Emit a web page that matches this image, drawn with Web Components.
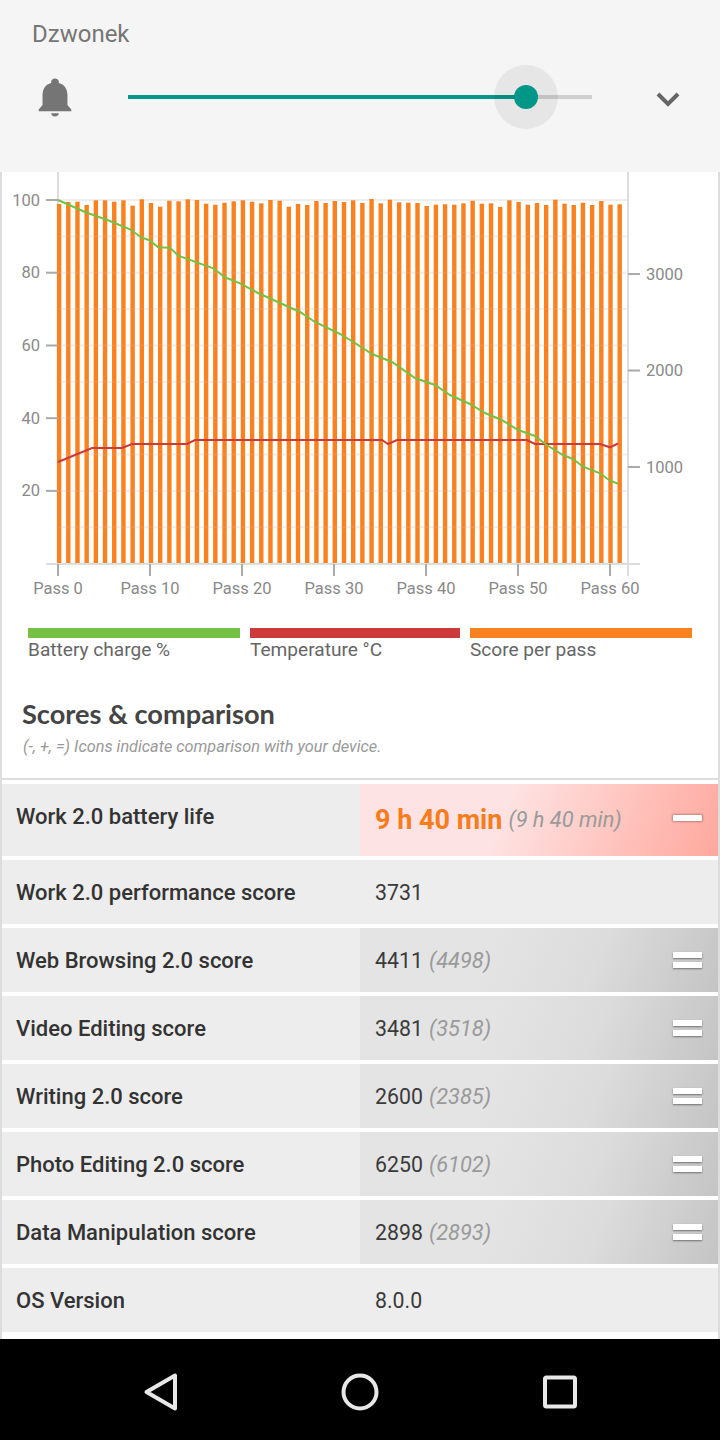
<!DOCTYPE html>
<html lang="pl">
<head>
<meta charset="utf-8">
<title>Work 2.0 battery</title>
<style>
html, body { margin: 0; padding: 0; background: #fff; }
body { width: 720px; height: 1440px; overflow: hidden; display: flex; flex-direction: column; font-family: Roboto, "Liberation Sans", sans-serif; }
</style>
</head>
<body>
<volume-panel label="Dzwonek"></volume-panel>
<result-page>
  <battery-chart></battery-chart>
  <chart-legend></chart-legend>
  <section-head title="Scores &amp; comparison" note="(-, +, =) Icons indicate comparison with your device."></section-head>
  <score-row label="Work 2.0 battery life" value="9 h 40 min" compare="(9 h 40 min)" icon="minus" main></score-row>
  <score-row label="Work 2.0 performance score" value="3731"></score-row>
  <score-row label="Web Browsing 2.0 score" value="4411" compare="(4498)" icon="equal"></score-row>
  <score-row label="Video Editing score" value="3481" compare="(3518)" icon="equal"></score-row>
  <score-row label="Writing 2.0 score" value="2600" compare="(2385)" icon="equal"></score-row>
  <score-row label="Photo Editing 2.0 score" value="6250" compare="(6102)" icon="equal"></score-row>
  <score-row label="Data Manipulation score" value="2898" compare="(2893)" icon="equal"></score-row>
  <score-row label="OS Version" value="8.0.0"></score-row>
</result-page>
<nav-bar></nav-bar>

<script>
const panelTemplate = document.createElement('template')
panelTemplate.innerHTML = `
<style>
:host { display: block; height: 172px; background: #f5f5f5; flex: none; box-sizing: border-box; padding: 20px 0 0 32px; }
.label { font: 400 24px/28px Roboto, sans-serif; color: #757575; height: 28px; }
.line { display: flex; align-items: center; margin-top: 17px; height: 64px; }
.bell { width: 46px; height: 46px; flex: none; }
.track { position: relative; width: 464px; height: 4px; margin-left: 50px; background: linear-gradient(to right, #009688 398px, #cfcfcf 398px); flex: none; }
.halo { position: absolute; left: 366px; top: -30px; width: 64px; height: 64px; border-radius: 50%; background: rgba(0, 0, 0, .06); }
.thumb { position: absolute; left: 386px; top: -10px; width: 24px; height: 24px; border-radius: 50%; background: #009688; }
.more { width: 36px; height: 36px; margin-left: 58px; margin-top: 4px; flex: none; }
</style>
<div class="label"></div>
<div class="line">
  <svg class="bell" viewBox="0 0 24 24"><path fill="#757575" d="M12 22.2c1.1 0 2-.7 2-1.7h-4c0 1 .9 1.7 2 1.7zm6.5-6V11c0-3.1-1.6-5.6-4.5-6.3v-.7c0-.9-.9-1.7-2-1.7s-2 .8-2 1.7v.7C7.100 5.400 5.500 7.900 5.500 11v5.200l-2 2.300v.9h17v-.9l-2-2.300z"/></svg>
  <div class="track"><div class="halo"></div><div class="thumb"></div></div>
  <svg class="more" viewBox="0 0 36 36"><path fill="none" stroke="#666" stroke-width="4" d="M8 13l10 10 10-10"/></svg>
</div>
`

customElements.define('volume-panel',
  class extends HTMLElement {
    constructor () {
      super()
      this.attachShadow({ mode: 'open' })
        .appendChild(panelTemplate.content.cloneNode(true))
    }

    connectedCallback () {
      this.shadowRoot.querySelector('.label').textContent = this.getAttribute('label')
    }
  }
)

const pageTemplate = document.createElement('template')
pageTemplate.innerHTML = `
<style>
:host { display: block; flex: 1; min-height: 0; overflow: hidden; background: #fff; border-left: 2px solid #ddd; border-right: 2px solid #ddd; }
</style>
<slot></slot>
`

customElements.define('result-page',
  class extends HTMLElement {
    constructor () {
      super()
      this.attachShadow({ mode: 'open' })
        .appendChild(pageTemplate.content.cloneNode(true))
    }
  }
)

// tops of the orange bars, read off the reference
const barTops = [204, 202, 201.7, 205, 200.3, 200.3, 201.7, 200.3, 205.7, 199.3, 203, 206.7, 200.7, 201.3, 199.3, 200, 203.7, 204.7, 202.7, 201.3, 200.3, 201.7, 203.3, 200, 200.7, 206.7, 204, 205, 201, 203, 201, 202, 200.3, 203, 199, 203.3, 199.7, 202.3, 202.7, 203, 206, 204.7, 204.3, 204.7, 203.3, 200.7, 203.7, 203.3, 207, 200.3, 202, 204.7, 203, 205, 199.7, 203.7, 205, 202.7, 205, 201, 204.7, 204.3]
const greenLine = '58,200 85,212 110,221 130,229.3 141.700,237.700 149,240 158.300,247.300 170,247.700 178.300,255.700 213.300,268.300 225,277.300 240,283.300 258,293 300,312 315,322 340,334 355,343 372,354 392,362 415,378 435,385 450,395 470,404 485,413 501.700,420 518.300,430 535,436 546.700,445 563,455 573,459 583,466.700 600,473.300 610,480.700 618.300,483.700'
const redLine = '58,462 92,448 122,448 132,444 187,444 195,440 382,440 388,444 397,440 527,440 535,444 600,444 610,447.300 618,443.500'

const svgText = (x, y, anchor, text) =>
  `<text x="${x}" y="${y}" text-anchor="${anchor}">${text}</text>`

customElements.define('battery-chart',
  class extends HTMLElement {
    constructor () {
      super()
      let grid = ''
      for (let i = 0; i < 11; i++) {
        const y = 200 + i * 36.36
        grid += `<rect x="58" y="${y - 1}" width="570" height="2" fill="#eee"/>`
      }
      let bars = ''
      barTops.forEach((top, i) => {
        bars += `<rect x="${56.900 + i * 9.19}" y="${top}" width="4.400" height="${564 - top}" fill="#f98120"/>`
      })
      let over = ''
      for (let i = 0; i < 10; i++) {
        over += `<rect x="58" y="${236.360 + i * 36.36 - 1}" width="570" height="2" fill="#fff" opacity=".08"/>`
      }
      let ticks = ''
      const left = [[100, 200], [80, 272.700], [60, 345.500], [40, 418.200], [20, 490.900]]
      left.forEach(([v, y]) => {
        ticks += `<rect x="46" y="${y - 1}" width="12" height="2" fill="#aaa"/>` + svgText(40, y + 5.500, 'end', v)
      })
      const right = [[3000, 274], [2000, 370.500], [1000, 467]]
      right.forEach(([v, y]) => {
        ticks += `<rect x="628" y="${y - 1}" width="12" height="2" fill="#aaa"/>` + svgText(646, y + 5.500, 'start', v)
      })
      const passes = [[0, 58], [10, 150], [20, 242], [30, 334], [40, 426], [50, 518], [60, 610]]
      passes.forEach(([v, x]) => {
        ticks += `<rect x="${x - 1}" y="564" width="2" height="12" fill="#aaa"/>` + svgText(x, 593.500, 'middle', 'Pass ' + v)
      })
      this.attachShadow({ mode: 'open' }).innerHTML = `
<style>
:host { display: block; height: 448px; }
svg { display: block; }
text { font: 400 16.500px Roboto, sans-serif; fill: #8a8a8a; }
</style>
<svg width="716" height="448" viewBox="2 172 716 448">
  ${grid}
  <rect x="57" y="172" width="2" height="392" fill="#ddd"/>
  <rect x="627" y="172" width="2" height="404" fill="#ddd"/>
  ${bars}
  ${over}
  <rect x="46" y="563" width="594" height="2" fill="#ddd"/>
  ${ticks}
  <polyline points="${redLine}" fill="none" stroke="#cc3a3a" stroke-width="2"/>
  <polyline points="${greenLine}" fill="none" stroke="#76c043" stroke-width="2"/>
</svg>`
    }
  }
)

const legendTemplate = document.createElement('template')
legendTemplate.innerHTML = `
<style>
:host { display: grid; grid-template-columns: 212px 210px 222px; column-gap: 10px; padding: 8px 0 0 26px; height: 52px; box-sizing: border-box; }
.key { font: 400 19.100px/24px Roboto, sans-serif; color: #666; }
.key::before { content: ""; display: block; height: 10px; background: var(--c); }
.key:first-child { text-indent: 1px; }
</style>
<div class="key" style="--c:#76c043">Battery charge %</div>
<div class="key" style="--c:#cc3a3a">Temperature °C</div>
<div class="key" style="--c:#f98120">Score per pass</div>
`

customElements.define('chart-legend',
  class extends HTMLElement {
    constructor () {
      super()
      this.attachShadow({ mode: 'open' })
        .appendChild(legendTemplate.content.cloneNode(true))
    }
  }
)

const headTemplate = document.createElement('template')
headTemplate.innerHTML = `
<style>
:host { display: block; box-sizing: border-box; height: 116px; padding: 34px 0 0 20px; border-bottom: 2px solid #ddd; margin-bottom: 4px; margin-top: -8px; }
h2 { margin: 0; font: 700 27.200px/32px Lato, sans-serif; color: #444; }
p { margin: 7px 0 0 1px; font: italic 400 16.300px/20px Roboto, sans-serif; color: #999; }
</style>
<h2></h2>
<p></p>
`

customElements.define('section-head',
  class extends HTMLElement {
    constructor () {
      super()
      this.attachShadow({ mode: 'open' })
        .appendChild(headTemplate.content.cloneNode(true))
    }

    connectedCallback () {
      this.shadowRoot.querySelector('h2').textContent = this.getAttribute('title')
      this.shadowRoot.querySelector('p').textContent = this.getAttribute('note')
    }
  }
)

const rowTemplate = document.createElement('template')
rowTemplate.innerHTML = `
<style>
:host { display: grid; grid-template-columns: 358px 358px; height: 64px; margin-bottom: 4px; background: #ededed; }
:host([main]) { height: 72px; }
.name { align-self: center; padding: 2px 0 0 14px; font: 500 22px/26px Roboto, sans-serif; color: #333; }
:host([main]) .name { padding-top: 0; margin-top: -7px; }
.cell { display: flex; align-items: center; padding: 2px 16px 0 15px; }
:host([main]) .cell { padding-top: 0; }
:host([icon="equal"]) .cell { background: linear-gradient(112deg, #e4e4e4 0, #e4e4e4 35%, #dcdcdc 65%, #c4c4c4 100%); }
:host([icon="minus"]) .cell { background: linear-gradient(112deg, #fde3e3 0, #fde3e3 40%, #ffa89d 100%); }
.value { font: 400 21.300px/26px Roboto, sans-serif; color: #3a3a3a; }
:host([main]) .value { font-weight: 700; font-size: 27px; color: #f97c1c; }
.compare { margin-left: 6px; font: italic 400 21.800px/26px Roboto, sans-serif; color: #9a9a9a; }
.mark { margin-left: auto; margin-top: -2px; display: flex; flex-direction: column; gap: 4px; }
.mark i { display: block; width: 29px; height: 6px; background: #fff; box-shadow: 0 1px 2px rgba(0, 0, 0, .45); }
:host([icon="minus"]) .mark { margin-top: -4px; }
:host([icon="minus"]) .mark i { border-radius: 1px; box-shadow: 0 0 2px 1px rgba(120, 70, 60, .45); }
</style>
<div class="name"></div>
<div class="cell"><span class="value"></span><span class="compare"></span><span class="mark"></span></div>
`

customElements.define('score-row',
  class extends HTMLElement {
    constructor () {
      super()
      this.attachShadow({ mode: 'open' })
        .appendChild(rowTemplate.content.cloneNode(true))
    }

    connectedCallback () {
      const root = this.shadowRoot
      root.querySelector('.name').textContent = this.getAttribute('label')
      root.querySelector('.value').textContent = this.getAttribute('value')
      root.querySelector('.compare').textContent = this.getAttribute('compare') || ''
      const icon = this.getAttribute('icon')
      if (icon === 'equal') root.querySelector('.mark').innerHTML = '<i></i><i></i>'
      if (icon === 'minus') root.querySelector('.mark').innerHTML = '<i></i>'
    }
  }
)

const navTemplate = document.createElement('template')
navTemplate.innerHTML = `
<style>
:host { display: flex; flex: none; box-sizing: border-box; height: 101px; padding-top: 4px; background: #000; justify-content: center; align-items: center; gap: 120px; }
svg { width: 80px; height: 48px; display: block; }
.s { fill: none; stroke: #e8e8e8; stroke-width: 4; stroke-linejoin: round; }
</style>
<svg viewBox="0 0 80 48"><path class="s" d="M55 7.500v33L26.500 24z"/></svg>
<svg viewBox="0 0 80 48"><circle class="s" cx="40" cy="24" r="16.500"/></svg>
<svg viewBox="0 0 80 48"><rect class="s" x="25" y="9.500" width="30" height="29" rx="1.500"/></svg>
`

customElements.define('nav-bar',
  class extends HTMLElement {
    constructor () {
      super()
      this.attachShadow({ mode: 'open' })
        .appendChild(navTemplate.content.cloneNode(true))
    }
  }
)
</script>
</body>
</html>
